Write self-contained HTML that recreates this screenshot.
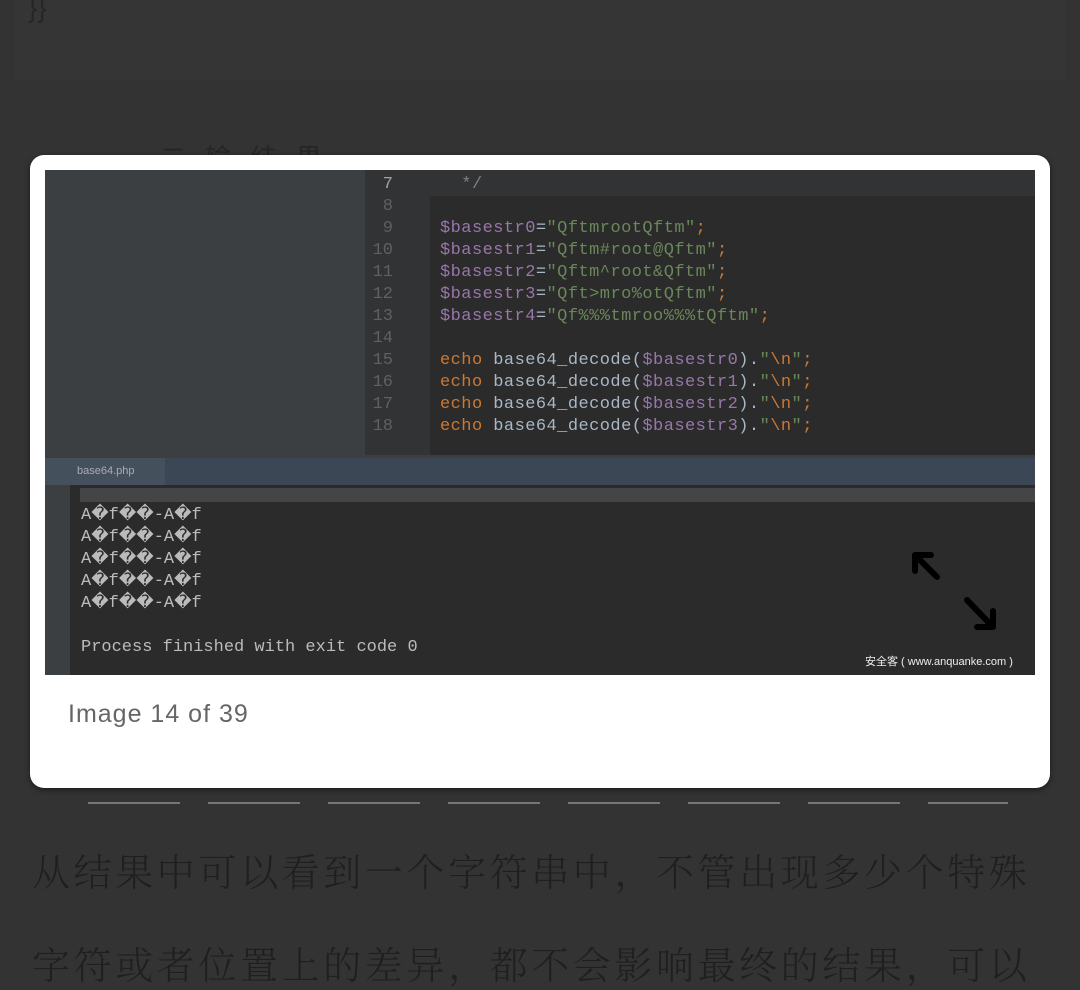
<!DOCTYPE html>
<html><head><meta charset="utf-8"><style>
*{margin:0;padding:0;box-sizing:border-box}
body{width:1080px;height:981px;background:#333333;position:relative;overflow:hidden;font-family:"Liberation Sans","Noto Sans CJK SC",sans-serif}
.abs{position:absolute}
.card{left:30px;top:155px;width:1020px;height:633px;background:#fff;border-radius:14px;box-shadow:0 2px 6px rgba(0,0,0,.5)}
.mono{font-family:"Liberation Mono",monospace;font-size:17px;white-space:pre;line-height:22px}
.ln{color:#5d6166;text-align:right;width:30px}
.v{color:#9876aa}.s{color:#6a8759}.k{color:#cc7832}.t{color:#a9b7c6}
.cn{color:#1f1f1f;font-size:38px;letter-spacing:3.6px;white-space:nowrap;font-family:"Noto Serif CJK SC","WenQuanYi Zen Hei",serif;font-weight:300}
</style></head><body>
<div class="abs" style="left:15px;top:0;width:1050px;height:80px;background:#353535"></div>
<div class="abs" style="left:28px;top:-8px;color:#262626;font-size:28px">}}</div>
<div class="abs" style="left:160px;top:138px;color:#262626;font-size:26px;letter-spacing:6px">二 输 结 果</div>
<div class="abs card"></div>
<div class="abs" style="left:45px;top:170px;width:990px;height:505px;background:#2b2b2b;overflow:hidden">
 <div class="abs" style="left:0;top:0;width:320px;height:285px;background:#3c3f41"></div>
 <div class="abs" style="left:320px;top:0;width:65px;height:285px;background:#313335"></div>
 <div class="abs" style="left:385px;top:0;width:605px;height:26px;background:#313335"></div>
 <div class="abs mono" style="left:318px;top:4px"><div class="ln" style="color:#a4a3a3">7</div><div class="ln">8</div><div class="ln">9</div><div class="ln">10</div><div class="ln">11</div><div class="ln">12</div><div class="ln">13</div><div class="ln">14</div><div class="ln">15</div><div class="ln">16</div><div class="ln">17</div><div class="ln">18</div></div>
 <div class="abs mono" style="left:395px;top:4px;letter-spacing:0.45px"><span style="color:#808080">  */</span>

<span class="v">$basestr0</span><span class="t">=</span><span class="s">"QftmrootQftm"</span><span class="k">;</span>
<span class="v">$basestr1</span><span class="t">=</span><span class="s">"Qftm#root@Qftm"</span><span class="k">;</span>
<span class="v">$basestr2</span><span class="t">=</span><span class="s">"Qftm^root&amp;Qftm"</span><span class="k">;</span>
<span class="v">$basestr3</span><span class="t">=</span><span class="s">"Qft&gt;mro%otQftm"</span><span class="k">;</span>
<span class="v">$basestr4</span><span class="t">=</span><span class="s">"Qf%%%tmroo%%%tQftm"</span><span class="k">;</span>

<span class="k">echo</span><span class="t"> base64_decode(</span><span class="v">$basestr0</span><span class="t">).</span><span class="s">"</span><span class="k">\n</span><span class="s">"</span><span class="k">;</span>
<span class="k">echo</span><span class="t"> base64_decode(</span><span class="v">$basestr1</span><span class="t">).</span><span class="s">"</span><span class="k">\n</span><span class="s">"</span><span class="k">;</span>
<span class="k">echo</span><span class="t"> base64_decode(</span><span class="v">$basestr2</span><span class="t">).</span><span class="s">"</span><span class="k">\n</span><span class="s">"</span><span class="k">;</span>
<span class="k">echo</span><span class="t"> base64_decode(</span><span class="v">$basestr3</span><span class="t">).</span><span class="s">"</span><span class="k">\n</span><span class="s">"</span><span class="k">;</span></div>
 <div class="abs" style="left:0;top:285px;width:990px;height:3px;background:#3c3f41"></div>
 <div class="abs" style="left:0;top:288px;width:990px;height:27px;background:#3b4754"></div>
 <div class="abs" style="left:0;top:288px;width:120px;height:27px;background:#44505c"></div>
 <div class="abs" style="left:32px;top:295px;color:#aab;font-size:11px">base64.php</div>
 <div class="abs" style="left:0;top:315px;width:25px;height:190px;background:#3c3f41"></div>
 <div class="abs" style="left:35px;top:318px;width:955px;height:14px;background:#4a4c4e;opacity:.8"></div>
 <div class="abs mono" style="left:36px;top:335px;color:#bbbbbb">A�f��-A�f
A�f��-A�f
A�f��-A�f
A�f��-A�f
A�f��-A�f

Process finished with exit code 0</div>
 <svg class="abs" style="left:860px;top:375px" width="100" height="95"><g stroke="#000" stroke-width="6" fill="none" stroke-linecap="round"><path d="M10 10 L32 32 M10 10 L10 26 M10 10 L26 10"/><path d="M62 55 L88 82 M88 82 L88 66 M88 82 L72 82"/></g></svg>
 <div class="abs" style="left:820px;top:483px;color:#eee;font-size:11px">安全客 ( www.anquanke.com )</div>
</div>
<div class="abs" style="left:68px;top:700px;color:#666;font-size:25px;font-family:'Liberation Sans',sans-serif;letter-spacing:1px">Image 14 of 39</div>
<div class="abs" style="left:88px;top:802px;width:920px;height:2px;background:repeating-linear-gradient(90deg,#777 0 92px,transparent 92px 120px)"></div>
<div class="abs cn" style="left:32px;top:842px">从结果中可以看到一个字符串中，不管出现多少个特殊</div>
<div class="abs cn" style="left:32px;top:935px">字符或者位置上的差异，都不会影响最终的结果，可以</div>
</body></html>
